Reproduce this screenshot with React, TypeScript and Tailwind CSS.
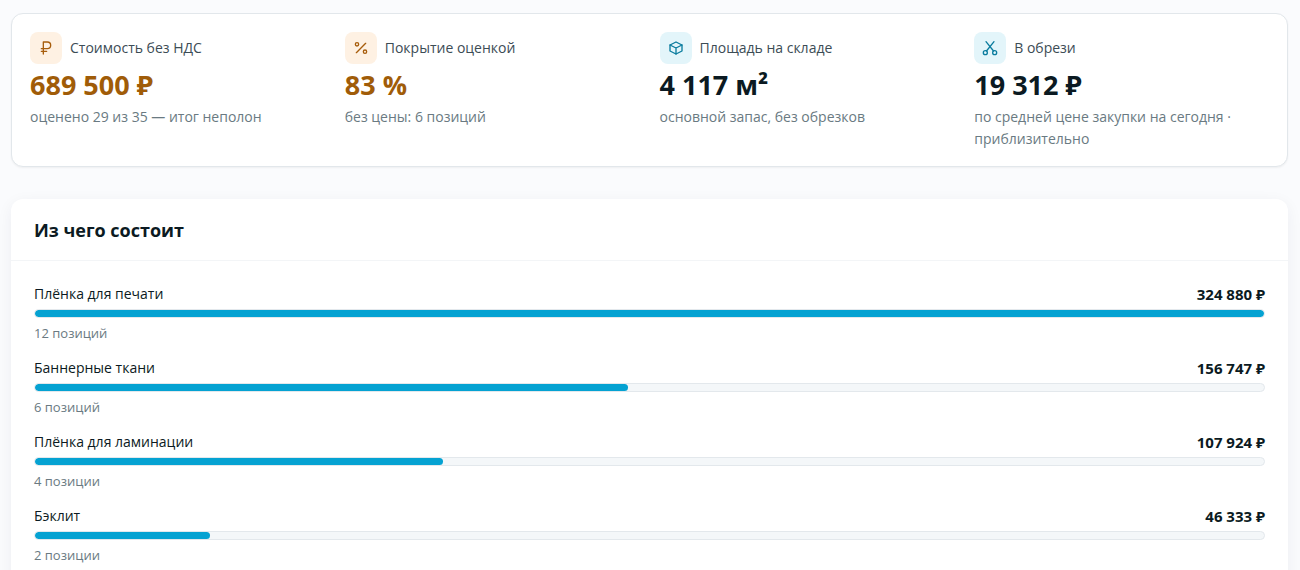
import type { ReactNode } from 'react'
import { clsx } from 'clsx'

interface Stat {
  label: string
  value: string
  note: string
  tone: 'warn' | 'info'
  icon: ReactNode
}

interface Category {
  name: string
  amount: number
  count: string
}

const stats: Stat[] = [
  {
    label: 'Стоимость без НДС',
    value: '689 500 ₽',
    note: 'оценено 29 из 35 — итог неполон',
    tone: 'warn',
    icon: <path d="M8 21V3h6a5 5 0 0 1 0 10H5M5 17h8" />
  },
  {
    label: 'Покрытие оценкой',
    value: '83 %',
    note: 'без цены: 6 позиций',
    tone: 'warn',
    icon: (
      <>
        <path d="M19 5 5 19" />
        <circle cx="6" cy="6.5" r="2.5" />
        <circle cx="18" cy="17.5" r="2.5" />
      </>
    )
  },
  {
    label: 'Площадь на складе',
    value: '4 117 м²',
    note: 'основной запас, без обрезков',
    tone: 'info',
    icon: (
      <>
        <path d="m12 3 9 4.5v9L12 21l-9-4.5v-9Z" />
        <path d="m3 7.5 9 4.5 9-4.5M12 12v9" />
      </>
    )
  },
  {
    label: 'В обрези',
    value: '19 312 ₽',
    note: 'по средней цене закупки на сегодня · приблизительно',
    tone: 'info',
    icon: (
      <>
        <circle cx="5" cy="19" r="3" />
        <circle cx="19" cy="19" r="3" />
        <path d="M6 2.5 17.3 16.5M18 2.5 6.7 16.5" />
      </>
    )
  }
]

const categories: Category[] = [
  { name: 'Плёнка для печати', amount: 324880, count: '12 позиций' },
  { name: 'Баннерные ткани', amount: 156747, count: '6 позиций' },
  { name: 'Плёнка для ламинации', amount: 107924, count: '4 позиции' },
  { name: 'Бэклит', amount: 46333, count: '2 позиции' }
]

const maxAmount = Math.max(...categories.map(c => c.amount))

function formatAmount(n: number) {
  return `${String(n).replace(/\B(?=(\d{3})+$)/g, '\u00a0')}\u00a0₽`
}

function StatItem({ label, value, note, tone, icon }: Stat) {
  const warn = tone === 'warn'
  return (
    <div>
      <div className="flex items-center gap-2">
        <span
          className={clsx(
            'flex size-8 items-center justify-center rounded-lg',
            warn ? 'bg-[#fef1e3] text-[#a75d0c]' : 'bg-[#e3f5fa] text-[#0a7c9e]'
          )}
        >
          <svg
            viewBox="0 0 24 24"
            className="size-4"
            fill="none"
            stroke="currentColor"
            strokeWidth="2"
            strokeLinecap="round"
            strokeLinejoin="round"
            aria-hidden="true"
          >
            {icon}
          </svg>
        </span>
        <span className="text-sm text-[#3c4c55]">{label}</span>
      </div>
      <p
        className={clsx(
          'mt-1 text-[27px] leading-[34px] font-bold',
          warn ? 'text-[#a05c08]' : 'text-[#0b1a22]'
        )}
      >
        {value}
      </p>
      <p className="mt-1 text-sm leading-[22px] text-[#6a7a82]">{note}</p>
    </div>
  )
}

function CategoryRow({ name, amount, count }: Category) {
  return (
    <li>
      <div className="flex items-center justify-between text-sm leading-6 text-[#0b1a22]">
        <span>{name}</span>
        <span className="text-[15px] leading-6 font-bold">
          {formatAmount(amount)}
        </span>
      </div>
      <div className="mt-[3px] h-[9px] overflow-hidden rounded-full border border-[#e3e8ec] bg-[#f4f7f9]">
        <div
          className="h-full rounded-full bg-[#05a2d2]"
          style={{ width: `${(amount / maxAmount) * 100}%` }}
        />
      </div>
      <p className="mt-[5px] text-[13px] leading-5 text-[#6a7a82]">{count}</p>
    </li>
  )
}

export default function App() {
  return (
    <main className="h-screen overflow-hidden bg-[#fafbfd] pt-[13px] pr-3 pl-[11px] font-['Open_Sans','Noto_Sans',sans-serif]">
      <section className="grid grid-cols-4 gap-5 rounded-xl border border-[#e2e7eb] bg-white p-[18px] pb-4 shadow-xs">
        {stats.map(stat => (
          <StatItem key={stat.label} {...stat} />
        ))}
      </section>

      <section className="mt-8 rounded-xl bg-white pb-6 shadow-[0_4px_16px_rgba(15,40,60,0.06)]">
        <h2 className="border-b border-[#f3f5f7] px-[23px] pt-[17px] pb-4 text-lg font-bold text-[#0b1a22]">
          Из чего состоит
        </h2>
        <ul className="flex flex-col gap-[13px] px-[23px] pt-[21px]">
          {categories.map(category => (
            <CategoryRow key={category.name} {...category} />
          ))}
        </ul>
      </section>
    </main>
  )
}
